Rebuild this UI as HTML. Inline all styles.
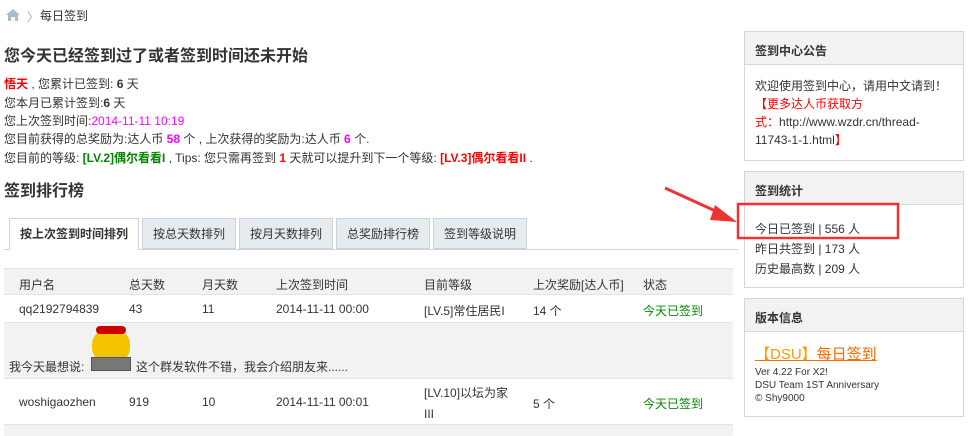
<!DOCTYPE html>
<html><head><meta charset="utf-8"><style>
*{margin:0;padding:0;box-sizing:border-box}
body{width:974px;height:434px;overflow:hidden;background:#fff;font-family:"Liberation Sans","Noto Sans CJK SC",sans-serif;font-size:12px;color:#333;position:relative}
.a{position:absolute;white-space:nowrap}
.r{color:#f00;font-weight:bold}.m{color:#f0f;}.mb{color:#f0f;font-weight:bold}.g{color:#080;font-weight:bold}
.box{position:absolute;left:744px;width:220px;border:1px solid #d5d5d5;background:#fff}
.box .h{height:33px;background:#f2f2f2;border-bottom:1px solid #cdd;font-weight:bold;padding:10px 10px;font-size:12px}
.tab{position:absolute;top:218px;height:31px;border:1px solid #cdd3db;background:#e6ebf0;padding:0;line-height:30px;font-size:12px;text-align:center;white-space:nowrap}
.row{position:absolute;left:4px;width:729px}
</style></head><body>
<svg class="a" style="left:5px;top:8px" width="16" height="14"><path d="M1 7 L8 1 L15 7 L13 7 L13 13 L10 13 L10 9 L6 9 L6 13 L3 13 L3 7Z" fill="#aabbcc"/></svg>
<div class="a" style="left:27px;top:8px;color:#aaa">〉</div>
<div class="a" style="left:40px;top:7px">每日签到</div>
<div class="a" style="left:4px;top:42px;font-size:16px;font-weight:bold">您今天已经签到过了或者签到时间还未开始</div>
<div class="a" style="left:4px;top:75px"><span class="r">悟天</span> , 您累计已签到: <b>6</b> 天</div>
<div class="a" style="left:4px;top:94px">您本月已累计签到:<b>6</b> 天</div>
<div class="a" style="left:4px;top:112px">您上次签到时间:<span class="m">2014-11-11 10:19</span></div>
<div class="a" style="left:4px;top:130px">您目前获得的总奖励为:达人币 <span class="mb">58</span> 个 , 上次获得的奖励为:达人币 <span class="mb">6</span> 个.</div>
<div class="a" style="left:4px;top:149px">您目前的等级: <span class="g">[LV.2]偶尔看看I</span> , Tips: 您只需再签到 <span class="r">1</span> 天就可以提升到下一个等级: <span class="r">[LV.3]偶尔看看II</span> .</div>
<div class="a" style="left:4px;top:177px;font-size:16px;font-weight:bold">签到排行榜</div>
<div class="a" style="left:4px;top:249px;width:734px;border-top:1px solid #cdd3db"></div>
<div class="tab" style="left:9px;width:130px;height:32px;background:#fff;border-bottom:none;font-weight:bold">按上次签到时间排列</div>
<div class="tab" style="left:142px;width:94px">按总天数排列</div>
<div class="tab" style="left:239px;width:94px">按月天数排列</div>
<div class="tab" style="left:336px;width:94px">总奖励排行榜</div>
<div class="tab" style="left:433px;width:94px">签到等级说明</div>
<div class="row" style="top:268px;height:27px;background:#f2f2f2;border-top:1px solid #e4e4e4;border-bottom:1px solid #e4e4e4"></div>
<div class="row" style="top:322px;height:57px;background:#f2f2f2;border-top:1px solid #e4e4e4;border-bottom:1px solid #e4e4e4"></div>
<div class="row" style="top:424px;height:12px;background:#f2f2f2;border-top:1px solid #e4e4e4"></div>
<div class="a" style="left:19px;top:276px">用户名</div><div class="a" style="left:129px;top:276px">总天数</div><div class="a" style="left:202px;top:276px">月天数</div><div class="a" style="left:276px;top:276px">上次签到时间</div><div class="a" style="left:424px;top:276px">目前等级</div><div class="a" style="left:533px;top:276px">上次奖励[达人币]</div><div class="a" style="left:643px;top:276px">状态</div>
<div class="a" style="left:19px;top:302px">qq2192794839</div><div class="a" style="left:129px;top:302px">43</div><div class="a" style="left:202px;top:302px">11</div><div class="a" style="left:276px;top:302px">2014-11-11 00:00</div><div class="a" style="left:424px;top:302px">[LV.5]常住居民I</div><div class="a" style="left:533px;top:302px">14 个</div><div class="a" style="left:643px;top:302px;color:#080">今天已签到</div>
<div class="a" style="left:9px;top:358px">我今天最想说:</div>
<div class="a" style="left:92px;top:330px;width:38px;height:32px;border-radius:14px;background:#f5c400"></div>
<div class="a" style="left:96px;top:326px;width:30px;height:8px;background:#c00;border-radius:4px"></div>
<div class="a" style="left:91px;top:357px;width:40px;height:14px;background:#777;border:1px solid #555"></div>
<div class="a" style="left:136px;top:358px">这个群发软件不错，我会介绍朋友来......</div>
<div class="a" style="left:19px;top:395px">woshigaozhen</div><div class="a" style="left:129px;top:395px">919</div><div class="a" style="left:202px;top:395px">10</div><div class="a" style="left:276px;top:395px">2014-11-11 00:01</div><div class="a" style="left:424px;top:383px;line-height:21px">[LV.10]以坛为家<br>III</div><div class="a" style="left:533px;top:395px">5 个</div><div class="a" style="left:643px;top:395px;color:#080">今天已签到</div>
<div class="box" style="top:31px;height:130px"><div class="h">签到中心公告</div><div style="padding:12px 10px;line-height:18px">欢迎使用签到中心，请用中文请到！<br><span style="color:#f00">【更多达人币获取方<br>式：</span>http://www.wzdr.cn/thread-<br>11743-1-1.html<span style="color:#f00">】</span></div></div>
<div class="box" style="top:171px;height:117px"><div class="h">签到统计</div><div style="padding:14px 10px;line-height:20px">今日已签到 | 556 人<br>昨日共签到 | 173 人<br>历史最高数 | 209 人</div></div>
<div class="box" style="top:298px;height:119px"><div class="h">版本信息</div><div style="padding:12px 10px;font-size:10px;line-height:13px"><span style="font-size:15px;color:#f60;text-decoration:underline;line-height:22px"><span style="color:#f90">【DSU】</span>每日签到</span><br>Ver 4.22 For X2!<br>DSU Team 1ST Anniversary<br>© Shy9000</div></div>
<svg class="a" style="left:0;top:0" width="974" height="434"><path d="M665 188 L722 214" stroke="#e33" stroke-width="3"/><path d="M737 222 L715 205 L710 220Z" fill="#e33"/><rect x="738" y="204" width="160" height="34" fill="none" stroke="#e33" stroke-width="2.5"/></svg>
</body></html>
